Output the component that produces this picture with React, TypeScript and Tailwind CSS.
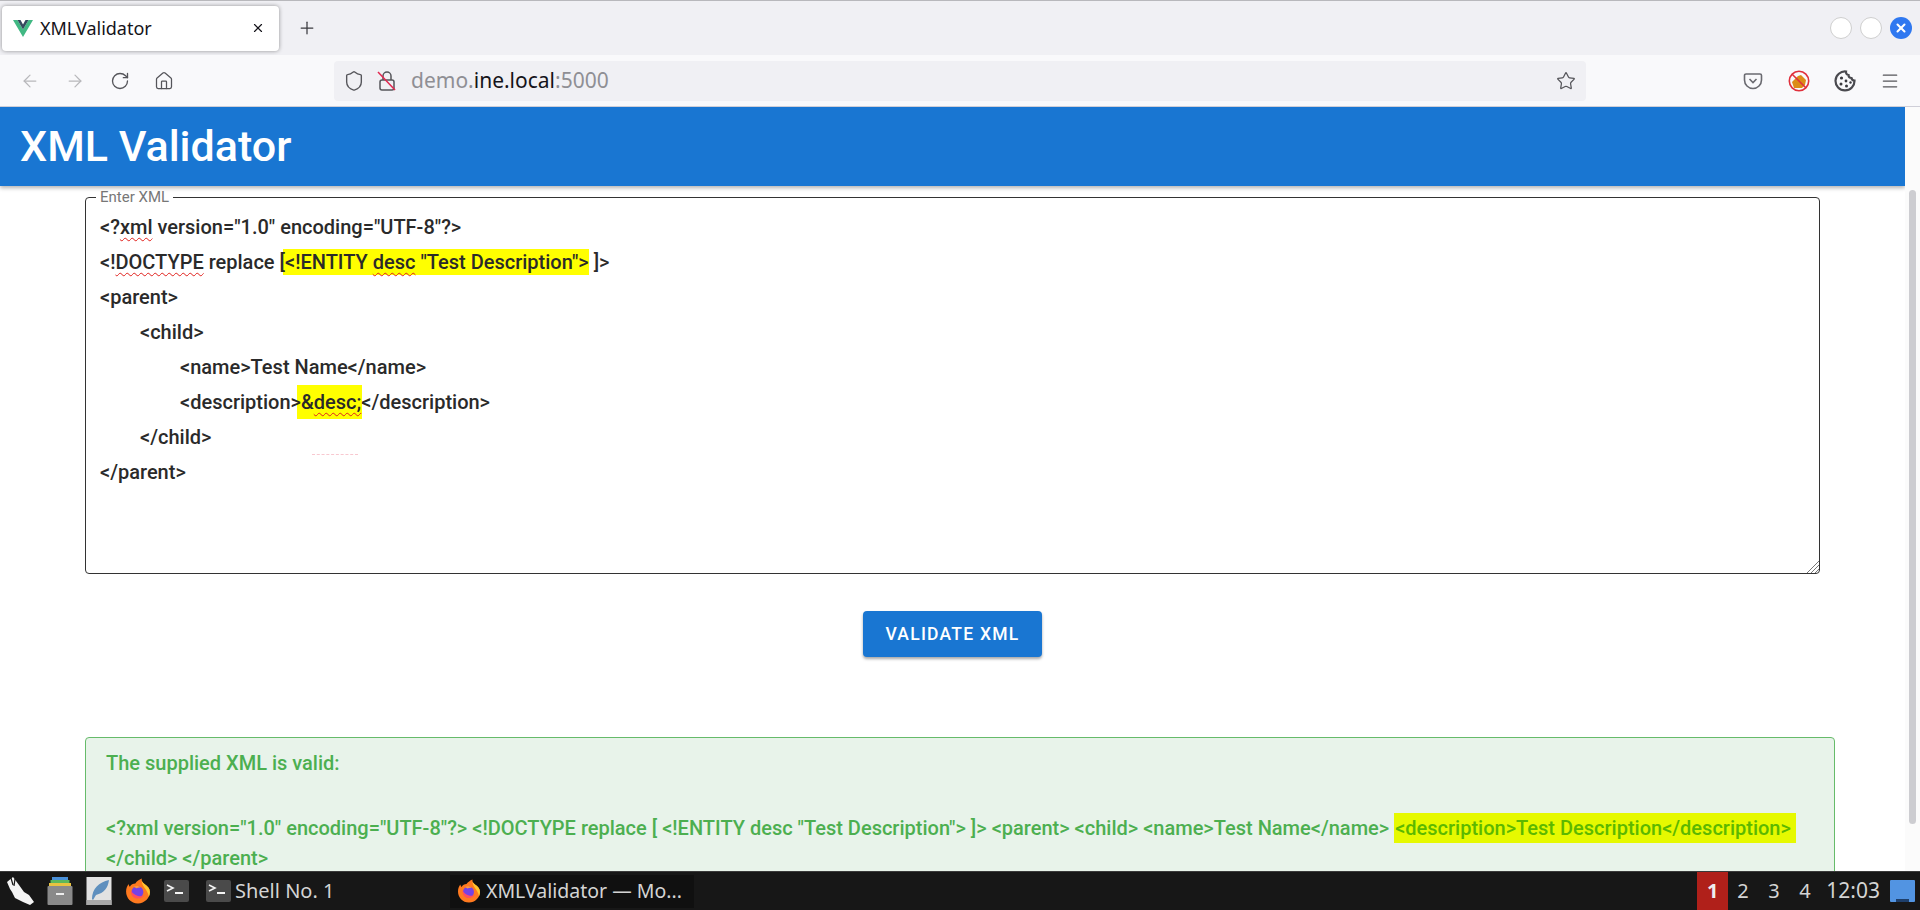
import { ArrowLeft, ArrowRight, Home, Menu, Plus, RotateCw, Shield, Star, X } from 'lucide-react';

const squiggle = 'underline decoration-wavy decoration-[#e0201c] decoration-1 underline-offset-[3px]';

function VueLogo() {
    return (
        <svg width="20" height="17" viewBox="0 0 20 17">
            <path d="M0 0h4.500L10 9.500 15.500 0H20L10 17z" fill="#41b883" />
            <path d="M4.500 0h3L10 4.500 12.500 0h3L10 9.500z" fill="#34495e" />
        </svg>
    );
}

function FirefoxLogo({ size = 24 }: { size?: number }) {
    return (
        <svg width={size} height={size} viewBox="0 0 24 24">
            <path d="M12 23.500C5.500 23.500 1 18.500 1 12.500 1 9.500 2 7 3.500 5.500c0 1.200.5 2 1 2.500C5.500 6 7.500 5 9.500 5 11 3 13 1.500 15.500.5c-.5 2 .5 3.500 2.500 5 3 2 5 4 5 7.500 0 5.500-5 10.500-11 10.500z" fill="#ff7a1f" />
            <path d="M15.500.5c-.5 2 .5 3.500 2.500 5 3 2 5 4 5 7.500 0 1.500-.3 3-1 4.300C21 10 14.500 8 15.500.5z" fill="#ffc62e" />
            <circle cx="11.500" cy="13" r="5.500" fill="#7542e5" />
            <path d="M5.500 11c-.5 4.500 2.500 8 6.500 8 2.800 0 5-1.500 6-3.800-1.500 1.300-3.800 2-6 1.300C9 15.500 6.500 14 5.500 11z" fill="#ff4f5e" />
            <path d="M8 8c2-1.200 5-.8 6.500.8-1.500-.3-3 0-4 .7z" fill="#ff9a3c" />
        </svg>
    );
}

function TerminalIcon() {
    return (
        <svg width="25" height="22" viewBox="0 0 25 22">
            <rect width="25" height="22" rx="2" fill="#4a4a4a" />
            <path d="M3 5l6 3-6 3" fill="none" stroke="#f4f4f4" strokeWidth="1.600" />
            <path d="M11 13h8" stroke="#f4f4f4" strokeWidth="2" />
        </svg>
    );
}

function BrowserChrome() {
    return (
        <>
            <div className="h-[55px] shrink-0 bg-[#f0f0f4] border-t border-[#b8b8bc] flex items-center pl-[2px] pr-[8px]">
                <div className="w-[277px] h-[45px] bg-white rounded-[4px] shadow-[0_0_4px_rgba(0,0,0,0.4)] flex items-center pl-[11px] pr-[14px]">
                    <VueLogo />
                    <span className="ml-[7px] text-[18px] text-[#15141a] flex-1 font-['Noto_Sans',sans-serif]">XMLValidator</span>
                    <X size={14} className="text-[#15141a]" />
                </div>
                <Plus size={20} strokeWidth={1.500} className="ml-[18px] text-[#3a3a3f]" />
                <div className="flex-1" />
                <div className="flex items-center gap-[8px]">
                    <span className="w-[22px] h-[22px] rounded-full bg-white border border-[#cfcfcf]" />
                    <span className="w-[22px] h-[22px] rounded-full bg-white border border-[#cfcfcf]" />
                    <span className="w-[22px] h-[22px] rounded-full bg-[#2f78f0] flex items-center justify-center">
                        <X size={14} strokeWidth={3.500} className="text-white" />
                    </span>
                </div>
            </div>
            <div className="h-[52px] shrink-0 bg-[#f9f9fb] border-b border-[#cfcfd8] flex items-center">
                <ArrowLeft size={20} strokeWidth={1.500} className="ml-[20px] text-[#b8b8bb]" />
                <ArrowRight size={20} strokeWidth={1.500} className="ml-[25px] text-[#b8b8bb]" />
                <RotateCw size={20} strokeWidth={1.600} className="ml-[25px] text-[#55555a]" />
                <Home size={20} strokeWidth={1.500} className="ml-[24px] text-[#55555a]" />
                <div className="ml-[160px] w-[1252px] h-[40px] bg-[#f0f0f4] rounded-[4px] flex items-center pl-[9px] pr-[10px]">
                    <Shield size={22} strokeWidth={1.500} className="text-[#55555a]" />
                    <svg className="ml-[12px]" width="20" height="22" viewBox="0 0 20 22">
                        <rect x="3" y="10" width="14" height="10" rx="2" fill="none" stroke="#55555a" strokeWidth="1.500" />
                        <path d="M6 10V6a4 4 0 0 1 8 0v4" fill="none" stroke="#55555a" strokeWidth="1.500" />
                        <path d="M1 2l17 18" stroke="#e22850" strokeWidth="1.500" />
                    </svg>
                    <span className="ml-[14px] text-[21px] text-[#8f8f94] font-['Noto_Sans',sans-serif]">
                        demo.<span className="text-[#15141a]">ine.local</span>:5000
                    </span>
                    <div className="flex-1" />
                    <Star size={20} strokeWidth={1.500} className="text-[#55555a]" />
                </div>
                <div className="flex-1" />
                <svg className="mr-[25px]" width="20" height="20" viewBox="0 0 20 20">
                    <path d="M3 3h14a1.500 1.500 0 0 1 1.500 1.500V9a8.500 8.500 0 0 1-17 0V4.500A1.500 1.500 0 0 1 3 3z" fill="none" stroke="#6a6a70" strokeWidth="1.600" />
                    <path d="M6.500 8l3.500 3.500L13.500 8" fill="none" stroke="#6a6a70" strokeWidth="1.600" />
                </svg>
                <svg className="mr-[24px]" width="22" height="22" viewBox="0 0 22 22">
                    <path d="M4 12l6-6 3-1 3 3 2 2-1 5-3 3H6z" fill="#dc8c18" />
                    <circle cx="11" cy="11" r="9.700" fill="none" stroke="#e0303c" strokeWidth="1.600" />
                    <path d="M4.200 4.200l13.600 13.600" stroke="#e0303c" strokeWidth="1.600" />
                </svg>
                <svg className="mr-[24px]" width="22" height="22" viewBox="0 0 22 22">
                    <path d="M12 1.500a3 3 0 0 0 2.500 3.500 3 3 0 0 0 3 3 3 3 0 0 0 3 2.500A9.500 9.500 0 1 1 12 1.500z" fill="#f9f9fb" stroke="#4a4a4f" strokeWidth="2.200" />
                    <circle cx="7.500" cy="8" r="1.600" fill="#3a3a3f" />
                    <circle cx="12" cy="11" r="1.400" fill="#3a3a3f" />
                    <circle cx="7" cy="14" r="1.500" fill="#3a3a3f" />
                    <circle cx="12.500" cy="16" r="1.500" fill="#3a3a3f" />
                    <circle cx="16.500" cy="12.500" r="1.200" fill="#3a3a3f" />
                </svg>
                <Menu size={20} strokeWidth={1.500} className="mr-[20px] text-[#55555a]" />
            </div>
        </>
    );
}

function XmlEditor() {
    return (
        <fieldset className="border border-[#333] rounded-[4px] ml-[85px] mr-[85px] mt-[1px] h-[383px] pl-[14px] relative">
            <legend className="text-[15px] leading-[12px] text-[#777] px-[4px] ml-[-4px]">Enter XML</legend>
            {/* isolate + z-[-1]: the highlights sit behind the neighbouring glyphs they overlap */}
            <div className="isolate pt-[7px] text-[20px] leading-[35px] font-medium text-[#2a2a2a]">
                <div>&lt;?<span className={squiggle}>xml</span> version="1.0" encoding="UTF-8"?&gt;</div>
                <div>
                    &lt;!<span className={squiggle}>DOCTYPE</span> replace [
                    <span className="relative z-[-1] bg-[#ffff00] py-[1px] ml-[-2px] pl-[2px]">&lt;!ENTITY <span className={squiggle}>desc</span> "Test Description"&gt;</span> ]&gt;
                </div>
                <div>&lt;parent&gt;</div>
                <div className="pl-[40px]">&lt;child&gt;</div>
                <div className="pl-[80px]">&lt;name&gt;Test Name&lt;/name&gt;</div>
                <div className="pl-[80px]">
                    &lt;description&gt;
                    <span className="relative z-[-1] bg-[#ffff00] py-[5px] ml-[-4px] pl-[4px] pr-[1px] mr-[-1px]">&amp;<span className={squiggle}>desc;</span></span>
                    &lt;/description&gt;
                </div>
                <div className="pl-[40px]">&lt;/child&gt;</div>
                <div>&lt;/parent&gt;</div>
            </div>
            <span className="absolute left-[226px] top-[251px] w-[46px] border-t border-dashed border-[#f8c8d0]" />
            <svg className="absolute right-0 bottom-0" width="13" height="13" viewBox="0 0 13 13">
                <path d="M13 1L1 13M13 5L5 13M13 9L9 13" stroke="#777" strokeWidth="1" />
            </svg>
        </fieldset>
    );
}

function ResultAlert() {
    return (
        <div className="ml-[85px] mr-[70px] mt-[80px] h-[200px] border border-[#66bb6a] rounded-[4px] bg-[#e8f3ea] px-[20px] pt-[10px] text-[20px] leading-[30px] font-medium text-[#4caf50]">
            <div>The supplied XML is valid:</div>
            <div className="mt-[35px]">
                &lt;?xml version="1.0" encoding="UTF-8"?&gt; &lt;!DOCTYPE replace [ &lt;!ENTITY desc "Test Description"&gt; ]&gt; &lt;parent&gt; &lt;child&gt; &lt;name&gt;Test Name&lt;/name&gt;{' '}
                <span className="bg-[#e6f900] text-[#5cb800] pl-[1px] pr-[5px] py-[3px]">&lt;description&gt;Test Description&lt;/description&gt;</span>{' '}
                &lt;/child&gt; &lt;/parent&gt;
            </div>
        </div>
    );
}

function Taskbar() {
    return (
        <div className="h-[39px] shrink-0 bg-[#171717] border-t border-[#3a3a3a] flex items-center text-[#d4d4d4] text-[20px] font-['Noto_Sans',sans-serif]">
            <svg className="ml-[6px]" width="29" height="30" viewBox="0 0 29 30">
                <path d="M1 6l6-5 6 8 5 7 5 3 5 7-4 3-7-3-8-4-3-6-2-3z" fill="#f4f4f4" />
                <path d="M5 2l2 7M9 3l-1 7" stroke="#171717" strokeWidth="1.200" />
            </svg>
            <svg className="ml-[12px]" width="26" height="30" viewBox="0 0 26 30">
                <rect x="5" y="1" width="16" height="3" fill="#4a90d9" />
                <rect x="3.500" y="4" width="19" height="3" fill="#5cb85c" />
                <rect x="2" y="7" width="22" height="3" fill="#e8c340" />
                <rect x="0.500" y="10" width="25" height="19" rx="1" fill="#8a8a8a" />
                <rect x="9" y="17" width="8" height="2" fill="#eee" />
            </svg>
            <svg className="ml-[13px]" width="26" height="30" viewBox="0 0 26 30">
                <rect x="0.500" y="1" width="25" height="28" fill="#e2e2e2" />
                <rect x="0.500" y="24" width="25" height="5" fill="#a8a8a8" />
                <path d="M6 23C6 13 13 6 23 4c-1 8-5 13-13 15l-3 5z" fill="#5f8fbe" />
            </svg>
            <div className="ml-[13px]"><FirefoxLogo size={26} /></div>
            <div className="ml-[13px]"><TerminalIcon /></div>
            <div className="ml-[17px] flex items-center w-[244px]">
                <TerminalIcon />
                <span className="ml-[4px]">Shell No. 1</span>
            </div>
            <div className="w-[244px] h-[33px] bg-[#101010] flex items-center pl-[7px] text-[19.500px]">
                <FirefoxLogo size={24} />
                <span className="ml-[5px]">XMLValidator — Mo...</span>
            </div>
            <div className="flex-1" />
            <div className="w-[31px] self-stretch bg-[#b0201a] flex items-center justify-center font-bold text-[#eeeeee]">1</div>
            <span className="ml-[9px] w-[13px]">2</span>
            <span className="ml-[18px] w-[13px]">3</span>
            <span className="ml-[18px] w-[13px]">4</span>
            <span className="ml-[14px] text-[21px]">12:03</span>
            <div className="ml-[10px] mr-[5px] w-[25px] h-[22px] bg-[#5294e2] rounded-[1px] relative">
                <span className="absolute bottom-0 left-[6px] right-[6px] h-[3px] bg-[#1e3f6b]" />
            </div>
        </div>
    );
}

export default function App() {
    return (
        <div className="h-[910px] flex flex-col overflow-hidden bg-white font-['Roboto',sans-serif]">
            <BrowserChrome />
            <div className="flex-1 min-h-0 flex overflow-hidden">
                <div className="flex-1 min-w-0 flex flex-col overflow-hidden">
                    <header className="h-[79px] shrink-0 bg-[#1976d2] text-white flex items-center pl-[20px] text-[43px] font-medium shadow-[0_2px_4px_rgba(0,0,0,0.3)] relative z-10">
                        XML Validator
                    </header>
                    <div className="mt-[4px]">
                        <XmlEditor />
                        <div className="flex justify-center mt-[37px]">
                            <button className="w-[179px] h-[46px] bg-[#1976d2] text-white text-[17.500px] font-medium tracking-[1.250px] uppercase rounded-[4px] shadow-[0_2px_3px_rgba(0,0,0,0.35)]">
                                Validate XML
                            </button>
                        </div>
                        <ResultAlert />
                    </div>
                </div>
                <div className="w-[15px] shrink-0 bg-[#fbfbfb] pl-[4px] pt-[83px]">
                    <div className="w-[7px] h-[634px] rounded-full bg-[#cdcdd1]" />
                </div>
            </div>
            <Taskbar />
        </div>
    );
}
